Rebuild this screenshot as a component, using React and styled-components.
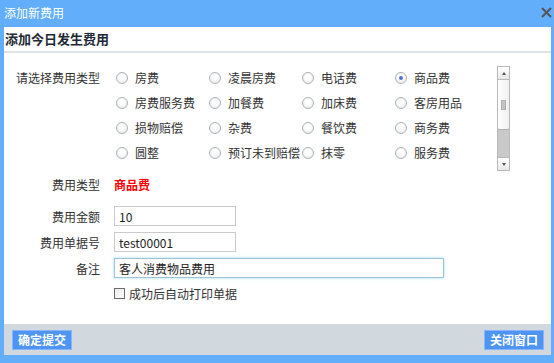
import styled, { createGlobalStyle } from "styled-components";

const GlobalStyle = createGlobalStyle`
  html, body {
    margin: 0;
    padding: 0;
    background: #ffffff;
  }
  body {
    font-family: "Noto Sans CJK SC", "Microsoft YaHei", "Liberation Sans", sans-serif;
    font-size: 12px;
    color: #333;
  }
  * {
    box-sizing: border-box;
  }
`;

const Window = styled.div`
  width: 554px;
  height: 363px;
  background: #62aefa;
  display: flex;
  flex-direction: column;
`;

const TitleBar = styled.div`
  height: 27px;
  flex-shrink: 0;
  display: flex;
  align-items: center;
  justify-content: space-between;
  padding: 0 2px 2px 4px;
  color: #ffffff;
  font-size: 12px;
`;

const CloseIcon = styled.svg`
  width: 11px;
  height: 11px;
  display: block;
`;

const Body = styled.div`
  flex: 1;
  margin: 0 3px 8px 4px;
  background: #ffffff;
  display: flex;
  flex-direction: column;
`;

const Heading = styled.div`
  height: 26px;
  flex-shrink: 0;
  display: flex;
  align-items: center;
  padding: 0 0 2px 1px;
  font-size: 13px;
  font-weight: bold;
  color: #1e2a33;
  border-bottom: 2px solid #dde3e6;
`;

const Form = styled.div`
  flex: 1;
  padding-top: 12px;
  display: flex;
  flex-direction: column;
`;

const FieldRow = styled.div`
  display: flex;
  align-items: ${({ $top }) => ($top ? "flex-start" : "center")};
  gap: 14px;
  height: ${({ $h }) => $h}px;
  margin-top: ${({ $mt }) => $mt || 0}px;
  flex-shrink: 0;
`;

const Label = styled.div`
  width: 96px;
  text-align: right;
  color: #333;
  white-space: nowrap;
  line-height: ${({ $lh }) => ($lh ? `${$lh}px` : "normal")};
`;

const ChoiceArea = styled.div`
  display: flex;
  height: 107px;
`;

const ChoiceList = styled.div`
  width: 383px;
  height: 107px;
  overflow: hidden;
  display: grid;
  grid-template-columns: repeat(4, 93px);
  grid-auto-rows: 25px;
  align-content: start;
`;

const Choice = styled.label`
  display: flex;
  align-items: center;
  gap: 7px;
  padding-left: 2px;
  white-space: nowrap;
  color: #333;
`;

const Radio = styled.span`
  width: 12px;
  height: 12px;
  flex-shrink: 0;
  border-radius: 50%;
  border: 1px solid #aeb2b5;
  background: radial-gradient(circle at 50% 40%, #ffffff 30%, #e2e4e6 100%);
  display: flex;
  align-items: center;
  justify-content: center;
  &::after {
    content: "";
    width: 4px;
    height: 4px;
    border-radius: 50%;
    background: ${({ $checked }) => ($checked ? "#4d6fe0" : "transparent")};
  }
`;

const ScrollBar = styled.div`
  width: 13px;
  height: 105px;
  margin-top: 1px;
  display: flex;
  flex-direction: column;
  border: 1px solid #b9b9b9;
  background: #c9c9c9;
`;

const ScrollButton = styled.div`
  height: 13px;
  flex-shrink: 0;
  background: linear-gradient(#ffffff, #e8e8e8);
  border-bottom: ${({ $down }) => ($down ? "none" : "1px solid #b9b9b9")};
  border-top: ${({ $down }) => ($down ? "1px solid #b9b9b9" : "none")};
  display: flex;
  align-items: center;
  justify-content: center;
  &::after {
    content: "";
    border-left: 2.5px solid transparent;
    border-right: 2.5px solid transparent;
    ${({ $down }) =>
      $down ? "border-top: 3px solid #555;" : "border-bottom: 3px solid #555;"}
  }
`;

const Thumb = styled.div`
  height: 50px;
  flex-shrink: 0;
  background: linear-gradient(90deg, #ffffff, #f0f0f0);
  border-bottom: 1px solid #adadad;
  border-radius: 0 0 2px 2px;
  display: flex;
  align-items: center;
  justify-content: center;
  &::after {
    content: "";
    width: 3px;
    height: 8px;
    background: #c4c4c4;
    border: 1px solid #b0b0b0;
  }
`;

const Track = styled.div`
  flex: 1;
`;

const TypeValue = styled.div`
  color: #ff0000;
  font-weight: bold;
`;

const Input = styled.input`
  width: ${({ $w }) => $w}px;
  height: 20px;
  border: 1px solid ${({ $focus }) => ($focus ? "#9fc3d6" : "#cbcbcb")};
  box-shadow: ${({ $focus }) => ($focus ? "0 0 3px #a8e0f8" : "none")};
  padding: 0 4px;
  font-family: inherit;
  font-size: 12px;
  color: #222;
  outline: none;
  background: #ffffff;
`;

const CheckLine = styled.label`
  display: flex;
  align-items: center;
  gap: 4px;
  margin-left: 110px;
  color: #333;
`;

const Checkbox = styled.span`
  width: 11px;
  height: 11px;
  border: 1px solid #6b6b6b;
  background: linear-gradient(135deg, #ececec, #ffffff);
`;

const Footer = styled.div`
  height: 31px;
  flex-shrink: 0;
  background: #d1d9de;
  display: flex;
  align-items: center;
  justify-content: space-between;
  padding: 0 7px 0 8px;
`;

const Button = styled.button`
  width: 60px;
  height: 20px;
  padding: 0;
  border: 1px solid #86b6f8;
  background: #4d94f5;
  color: #ffffff;
  font-family: inherit;
  font-size: 12px;
  font-weight: bold;
  cursor: pointer;
`;

const OPTIONS = [
  "房费", "凌晨房费", "电话费", "商品费",
  "房费服务费", "加餐费", "加床费", "客房用品",
  "损物赔偿", "杂费", "餐饮费", "商务费",
  "圆整", "预订未到赔偿", "抹零", "服务费",
];

const App = () => {
  const selected = "商品费";
  return (
    <>
      <GlobalStyle />
      <Window>
        <TitleBar>
          <span>添加新费用</span>
          <CloseIcon viewBox="0 0 11 11">
            <path d="M1 1 L10 10 M10 1 L1 10" stroke="#555" strokeWidth="2" />
          </CloseIcon>
        </TitleBar>
        <Body>
          <Heading>添加今日发生费用</Heading>
          <Form>
            <FieldRow $h={107} $top>
              <Label $lh={25}>请选择费用类型</Label>
              <ChoiceArea>
                <ChoiceList>
                  {OPTIONS.map((name) => (
                    <Choice key={name}>
                      <Radio $checked={name === selected} />
                      {name}
                    </Choice>
                  ))}
                </ChoiceList>
                <ScrollBar>
                  <ScrollButton />
                  <Thumb />
                  <Track />
                  <ScrollButton $down />
                </ScrollBar>
              </ChoiceArea>
            </FieldRow>
            <FieldRow $h={24}>
              <Label>费用类型</Label>
              <TypeValue>{selected}</TypeValue>
            </FieldRow>
            <FieldRow $h={20} $mt={10}>
              <Label>费用金额</Label>
              <Input $w={122} defaultValue="10" />
            </FieldRow>
            <FieldRow $h={20} $mt={6}>
              <Label>费用单据号</Label>
              <Input $w={122} defaultValue="test00001" />
            </FieldRow>
            <FieldRow $h={20} $mt={6}>
              <Label>备注</Label>
              <Input $w={330} $focus defaultValue="客人消费物品费用" />
            </FieldRow>
            <FieldRow $h={18} $mt={6}>
              <CheckLine>
                <Checkbox />
                成功后自动打印单据
              </CheckLine>
            </FieldRow>
          </Form>
          <Footer>
            <Button>确定提交</Button>
            <Button>关闭窗口</Button>
          </Footer>
        </Body>
      </Window>
    </>
  );
};

export default App;
